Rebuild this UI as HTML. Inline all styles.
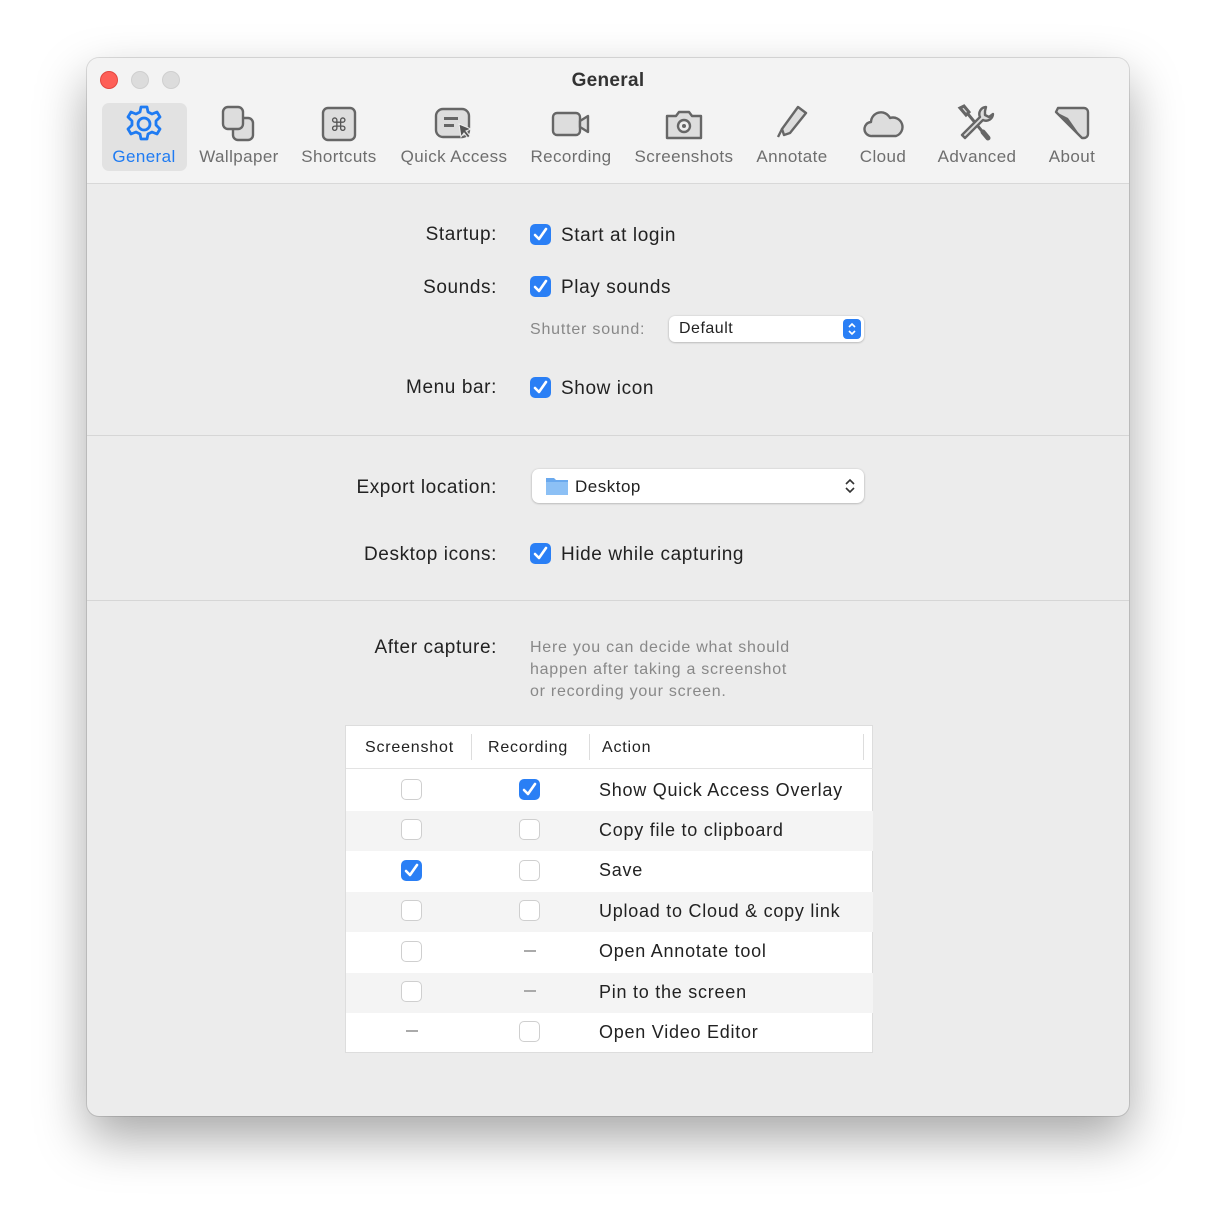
<!DOCTYPE html>
<html><head><meta charset="utf-8"><style>
*{margin:0;padding:0;box-sizing:border-box}
body{width:1216px;height:1231px;background:#fff;position:relative;font-family:"Liberation Sans",sans-serif;overflow:hidden;letter-spacing:0.5px}
.win{position:absolute;left:87px;top:58px;width:1042px;height:1058px;border-radius:12px;background:#ececec;box-shadow:0 22px 50px rgba(0,0,0,.35),0 0 0 1px rgba(0,0,0,.12);overflow:hidden}
.tb{position:absolute;left:0;top:0;width:1042px;height:126px;background:#f3f3f3;border-bottom:1px solid #d8d8d8}
.a{position:absolute}
.dot{position:absolute;top:13px;width:18px;height:18px;border-radius:50%;background:#dcdcdc;border:1px solid #cfcfcf}
.tl{position:absolute;top:89px;font-size:17px;color:#6e6e6e;transform:translateX(-50%);white-space:nowrap;letter-spacing:0.4px}
.ic{position:absolute;top:46px;transform:translateX(-50%)}
.lbl{position:absolute;right:632px;font-size:19px;color:#222;white-space:nowrap;letter-spacing:0.6px}
.txt{position:absolute;font-size:19px;color:#222;white-space:nowrap;letter-spacing:0.6px}
.cb{position:absolute;width:21px;height:21px;border-radius:5px;background:#2a7ff5;}
.cb svg{position:absolute;left:2px;top:2px}
.ub{position:absolute;width:21px;height:21px;border-radius:5px;background:#fff;border:1px solid #cfcfcf}
.sep{position:absolute;left:0;width:1042px;height:1px;background:#d6d6d6}
.row{position:absolute;left:0;width:527px;height:40.5px}
.dash{position:absolute;width:12px;height:2px;background:#aaa}
.t18{font-size:18px;letter-spacing:0.75px}
</style></head><body>
<div class="win">
<div class="tb"></div>
<div class="dot" style="left:13px;background:#fe5f57;border-color:#e2463f"></div>
<div class="dot" style="left:44px"></div>
<div class="dot" style="left:75px"></div>
<div class="a" style="left:0;width:1042px;top:12px;text-align:center;font-size:19px;font-weight:bold;color:#333;letter-spacing:0.3px">General</div>
<div class="a" style="left:15px;top:45px;width:85px;height:68px;border-radius:7px;background:#e2e2e2"></div>

<svg class="ic" style="left:57px" width="40" height="40" viewBox="0 0 40 40"><path d="M17 3h6l1 5 4 2 5-2 3 5-4 4v4l4 4-3 5-5-2-4 2-1 5h-6l-1-5-4-2-5 2-3-5 4-4v-4l-4-4 3-5 5 2 4-2z" fill="none" stroke="#1f7bf2" stroke-width="2.8" stroke-linejoin="round"/><circle cx="20" cy="20" r="6" fill="none" stroke="#1f7bf2" stroke-width="2.8"/></svg>
<div class="tl" style="left:57px;color:#1f7bf2">General</div>

<svg class="ic" style="left:152px" width="40" height="40" viewBox="0 0 40 40"><rect x="14" y="14" width="20" height="22" rx="5" fill="#ddd" stroke="#666" stroke-width="2.4"/><rect x="4" y="3" width="20" height="22" rx="5" fill="#ddd" stroke="#666" stroke-width="2.4"/></svg>
<div class="tl" style="left:152px">Wallpaper</div>

<svg class="ic" style="left:252px" width="40" height="40" viewBox="0 0 40 40"><rect x="4" y="4" width="32" height="32" rx="5" fill="#ddd" stroke="#666" stroke-width="2.4"/><text x="20" y="27" font-size="18" text-anchor="middle" fill="#555" font-family="DejaVu Sans">⌘</text></svg>
<div class="tl" style="left:252px">Shortcuts</div>

<svg class="ic" style="left:367px" width="44" height="40" viewBox="0 0 44 40"><rect x="4" y="5" width="33" height="28" rx="7" fill="#ddd" stroke="#666" stroke-width="2.4"/><rect x="12" y="13" width="14" height="3" fill="#666"/><rect x="12" y="20" width="10" height="3" fill="#666"/><path d="M27 20l12 5-5 2 4 5-2 2-4-5-3 4z" fill="#555" stroke="#eee" stroke-width="1"/></svg>
<div class="tl" style="left:367px">Quick Access</div>

<svg class="ic" style="left:484px" width="42" height="40" viewBox="0 0 42 40"><rect x="3" y="9" width="27" height="22" rx="4" fill="#ddd" stroke="#666" stroke-width="2.4"/><path d="M30 17l8-5v16l-8-5z" fill="#ddd" stroke="#666" stroke-width="2.4" stroke-linejoin="round"/></svg>
<div class="tl" style="left:484px">Recording</div>

<svg class="ic" style="left:597px" width="42" height="40" viewBox="0 0 42 40"><path d="M4 12h9l3-4h10l3 4h9v22H4z" fill="#ddd" stroke="#666" stroke-width="2.4" stroke-linejoin="round"/><circle cx="21" cy="22" r="6" fill="#eee" stroke="#666" stroke-width="2.4"/><circle cx="21" cy="22" r="2" fill="#666"/></svg>
<div class="tl" style="left:597px">Screenshots</div>

<svg class="ic" style="left:705px" width="40" height="40" viewBox="0 0 40 40"><path d="M26 3l8 6-16 20-6 2-2-6z" fill="#ddd" stroke="#666" stroke-width="2.4" stroke-linejoin="round"/><path d="M10 25l-4 8" stroke="#666" stroke-width="2.4"/></svg>
<div class="tl" style="left:705px">Annotate</div>

<svg class="ic" style="left:796px" width="42" height="40" viewBox="0 0 42 40"><path d="M10 32a7 7 0 0 1-1-14 10 10 0 0 1 19-4 8 8 0 0 1 6 18z" fill="#ddd" stroke="#666" stroke-width="2.4" stroke-linejoin="round"/></svg>
<div class="tl" style="left:796px">Cloud</div>

<svg class="ic" style="left:890px" width="42" height="40" viewBox="0 0 42 40"><path d="M4 4l4-2 5 6 -3 3zM12 10l18 22" stroke="#666" stroke-width="3" fill="#ddd" stroke-linecap="round"/><path d="M30 3a7 7 0 0 0-6 10L6 31l3 3 18-18a7 7 0 0 0 10-6l-4 3-4-2v-4z" fill="#ddd" stroke="#666" stroke-width="2.4" stroke-linejoin="round"/><path d="M27 28l5 6" stroke="#666" stroke-width="5" stroke-linecap="round"/></svg>
<div class="tl" style="left:890px">Advanced</div>

<svg class="ic" style="left:985px" width="40" height="40" viewBox="0 0 40 40"><path d="M6 4h26a4 4 0 0 1 4 4v22a4 4 0 0 1-4 4h-2L4 8z" fill="#ddd" stroke="#666" stroke-width="2.4" stroke-linejoin="round"/><path d="M4 8l12 6 14 20z" fill="#666"/></svg>
<div class="tl" style="left:985px">About</div>

<div class="lbl" style="top:166px">Startup:</div>
<div class="cb" style="left:443px;top:166px"><svg width="17" height="17"><path d="M3 9l4 4 7-10" stroke="#fff" stroke-width="2.6" fill="none" stroke-linecap="round" stroke-linejoin="round"/></svg></div>
<div class="txt" style="left:474px;top:167px">Start at login</div>
<div class="lbl" style="top:219px">Sounds:</div>
<div class="cb" style="left:443px;top:218px"><svg width="17" height="17"><path d="M3 9l4 4 7-10" stroke="#fff" stroke-width="2.6" fill="none" stroke-linecap="round" stroke-linejoin="round"/></svg></div>
<div class="txt" style="left:474px;top:219px">Play sounds</div>
<div class="txt" style="left:443px;top:263px;font-size:16px;color:#888;letter-spacing:0.8px">Shutter sound:</div>
<div class="a" style="left:582px;top:258px;width:195px;height:26px;background:#fff;border-radius:6px;box-shadow:0 0.5px 2px rgba(0,0,0,.3)"><span style="position:absolute;left:10px;top:4px;font-size:16px;color:#222">Default</span><div style="position:absolute;right:3px;top:3px;width:18px;height:20px;border-radius:4px;background:#2a7ff5"><svg width="18" height="20"><path d="M6 8l3-3 3 3M6 12l3 3 3-3" stroke="#fff" stroke-width="1.6" fill="none"/></svg></div></div>
<div class="lbl" style="top:319px">Menu bar:</div>
<div class="cb" style="left:443px;top:319px"><svg width="17" height="17"><path d="M3 9l4 4 7-10" stroke="#fff" stroke-width="2.6" fill="none" stroke-linecap="round" stroke-linejoin="round"/></svg></div>
<div class="txt" style="left:474px;top:320px">Show icon</div>
<div class="sep" style="top:377px"></div>

<div class="lbl" style="top:419px">Export location:</div>
<div class="a" style="left:445px;top:411px;width:332px;height:34px;background:#fff;border-radius:7px;box-shadow:0 0.5px 2px rgba(0,0,0,.3)"><svg style="position:absolute;left:13px;top:7px" width="24" height="20"><path d="M1 2h8l2 2h12v15H1z" fill="#6aa9ee"/><rect x="1" y="6" width="22" height="13" fill="#8cc0f5"/></svg><span style="position:absolute;left:43px;top:8px;font-size:17px;color:#222">Desktop</span><svg style="position:absolute;right:8px;top:8px" width="12" height="18"><path d="M2 7l4-4 4 4M2 11l4 4 4-4" stroke="#333" stroke-width="1.6" fill="none"/></svg></div>
<div class="lbl" style="top:486px">Desktop icons:</div>
<div class="cb" style="left:443px;top:485px"><svg width="17" height="17"><path d="M3 9l4 4 7-10" stroke="#fff" stroke-width="2.6" fill="none" stroke-linecap="round" stroke-linejoin="round"/></svg></div>
<div class="txt" style="left:474px;top:486px">Hide while capturing</div>
<div class="sep" style="top:542px"></div>

<div class="lbl" style="top:579px">After capture:</div>
<div class="a" style="left:443px;top:579px;font-size:16px;line-height:22px;color:#888;letter-spacing:0.75px">Here you can decide what should<br>happen after taking a screenshot<br>or recording your screen.</div>

<div class="a" style="left:258px;top:667px;width:528px;height:328px;background:#fff;border:1px solid #ddd">
<div class="a" style="left:0;top:0;width:527px;height:43px;border-bottom:1px solid #e3e3e3"></div>
<div class="a" style="left:19px;top:13px;font-size:16px;color:#222;letter-spacing:0.8px">Screenshot</div>
<div class="a" style="left:125px;top:8px;width:1px;height:26px;background:#ddd"></div>
<div class="a" style="left:142px;top:13px;font-size:16px;color:#222;letter-spacing:0.8px">Recording</div>
<div class="a" style="left:243px;top:8px;width:1px;height:26px;background:#ddd"></div>
<div class="a" style="left:256px;top:13px;font-size:16px;color:#222;letter-spacing:0.8px">Action</div>
<div class="a" style="left:517px;top:8px;width:1px;height:26px;background:#ddd"></div>

<div class="row" style="top:84.5px;background:#f4f4f4"></div>
<div class="row" style="top:165.5px;background:#f4f4f4"></div>
<div class="row" style="top:246.5px;background:#f4f4f4"></div>

<div class="ub" style="left:55px;top:53px"></div>
<div class="cb" style="left:173px;top:53px"><svg width="17" height="17"><path d="M3 9l4 4 7-10" stroke="#fff" stroke-width="2.6" fill="none" stroke-linecap="round" stroke-linejoin="round"/></svg></div>
<div class="txt t18" style="left:253px;top:54px">Show Quick Access Overlay</div>

<div class="ub" style="left:55px;top:93px"></div>
<div class="ub" style="left:173px;top:93px"></div>
<div class="txt t18" style="left:253px;top:94px">Copy file to clipboard</div>

<div class="cb" style="left:55px;top:134px"><svg width="17" height="17"><path d="M3 9l4 4 7-10" stroke="#fff" stroke-width="2.6" fill="none" stroke-linecap="round" stroke-linejoin="round"/></svg></div>
<div class="ub" style="left:173px;top:134px"></div>
<div class="txt t18" style="left:253px;top:134px">Save</div>

<div class="ub" style="left:55px;top:174px"></div>
<div class="ub" style="left:173px;top:174px"></div>
<div class="txt t18" style="left:253px;top:175px">Upload to Cloud &amp; copy link</div>

<div class="ub" style="left:55px;top:215px"></div>
<div class="dash" style="left:178px;top:224px"></div>
<div class="txt t18" style="left:253px;top:215px">Open Annotate tool</div>

<div class="ub" style="left:55px;top:255px"></div>
<div class="dash" style="left:178px;top:264px"></div>
<div class="txt t18" style="left:253px;top:256px">Pin to the screen</div>

<div class="dash" style="left:60px;top:304px"></div>
<div class="ub" style="left:173px;top:295px"></div>
<div class="txt t18" style="left:253px;top:296px">Open Video Editor</div>
</div>
</div>
</body></html>
